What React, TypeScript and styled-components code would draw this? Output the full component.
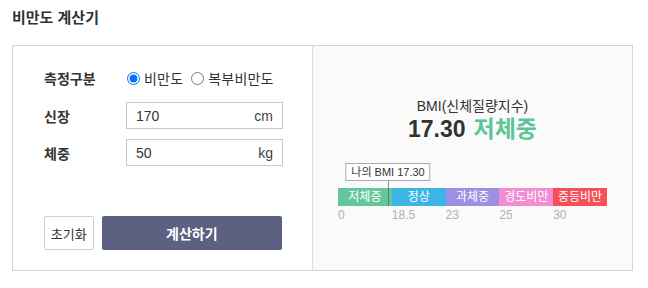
import React from "react";
import styled, { createGlobalStyle } from "styled-components";

const GlobalStyle = createGlobalStyle`
  body {
    margin: 0;
    background: #fff;
    font-family: "Liberation Sans", "Noto Sans CJK KR", sans-serif;
    color: #333;
  }
`;

const Page = styled.div`
  padding: 9px 12px 0 12px;
  width: 621px;
`;

const Title = styled.h2`
  margin: 0 0 19px 0;
  font-size: 15px;
  line-height: 17px;
  font-weight: bold;
  color: #333;
`;

const Box = styled.div`
  display: flex;
  height: 224px;
  border: 1px solid #d6d6d6;
`;

const FormPanel = styled.div`
  width: 300px;
  border-right: 1px solid #dcdcdc;
  padding: 20px 30px 0 31px;
  box-sizing: border-box;
  display: flex;
  flex-direction: column;
`;

const Row = styled.div<{ $h: number; $mb: number }>`
  display: flex;
  align-items: center;
  height: ${(p) => p.$h}px;
  margin-bottom: ${(p) => p.$mb}px;
`;

const Label = styled.div`
  width: 82px;
  flex-shrink: 0;
  font-size: 14px;
  font-weight: bold;
  color: #333;
`;

const RadioGroup = styled.div`
  display: flex;
  align-items: center;
  white-space: nowrap;
  font-size: 14px;
  letter-spacing: 0.2px;
  color: #333;
`;

const RadioLabel = styled.label`
  display: flex;
  align-items: center;
  white-space: nowrap;
  margin-right: 7px;

  input {
    margin: 0 4px 0 1px;
    width: 13px;
    height: 13px;
  }
`;

const Field = styled.div`
  display: flex;
  align-items: center;
  width: 157px;
  height: 27px;
  box-sizing: border-box;
  border: 1px solid #c8c8c8;
  background: #fff;
  padding: 0 9px 0 9px;
`;

const Input = styled.input`
  flex: 1;
  min-width: 0;
  border: none;
  outline: none;
  padding: 0;
  font-family: "Liberation Sans", sans-serif;
  font-size: 14px;
  color: #333;
  background: transparent;
`;

const Unit = styled.span`
  font-size: 14px;
  color: #444;
`;

const Buttons = styled.div`
  display: flex;
  margin-top: auto;
  margin-bottom: 20px;
  gap: 8px;
`;

const ResetButton = styled.button`
  width: 50px;
  height: 34px;
  padding: 0;
  background: #fff;
  border: 1px solid #cfcfcf;
  border-radius: 2px;
  font-family: "Noto Sans CJK KR", sans-serif;
  font-size: 13px;
  color: #333;
`;

const CalcButton = styled.button`
  width: 182px;
  height: 34px;
  background: #5d6181;
  border: none;
  border-radius: 2px;
  font-family: "Noto Sans CJK KR", sans-serif;
  font-size: 14px;
  font-weight: bold;
  color: #fff;
`;

const ResultPanel = styled.div`
  flex: 1;
  background: #fafafa;
  display: flex;
  flex-direction: column;
  align-items: center;
  padding-top: 51px;
`;

const Caption = styled.div`
  font-size: 14px;
  line-height: 18px;
  color: #333;
`;

const Result = styled.div`
  font-size: 23px;
  line-height: 28px;
  font-weight: bold;
  color: #333;
  margin-bottom: 20px;

  span {
    color: #5cc598;
    margin-left: 8px;
  }
`;

const Gauge = styled.div`
  position: relative;
  width: 269px;
  padding-top: 25px;
`;

const Tip = styled.div`
  position: absolute;
  top: 0;
  transform: translateX(-50%);
  background: #fff;
  border: 1px solid #aaa;
  font-size: 11px;
  line-height: 16px;
  padding: 0 5px;
  white-space: nowrap;
  color: #333;
`;

const Marker = styled.div`
  position: absolute;
  top: 18px;
  width: 1px;
  height: 25px;
  background: rgba(60, 90, 80, 0.6);
`;

const Bar = styled.div`
  display: flex;
  height: 18px;
`;

const Segment = styled.div<{ $color: string }>`
  flex: 1;
  background: ${(p) => p.$color};
  color: #fff;
  font-size: 12px;
  line-height: 18px;
  text-align: center;
  white-space: nowrap;
`;

const Scale = styled.div`
  display: flex;
  margin-top: 2px;
`;

const Tick = styled.div`
  flex: 1;
  font-size: 12px;
  line-height: 14px;
  color: #b0b0b0;
`;

const ranges = [
  { name: "저체중", color: "#62c89b", from: 0, to: 18.5 },
  { name: "정상", color: "#3bb5e3", from: 18.5, to: 23 },
  { name: "과체중", color: "#9e8fe4", from: 23, to: 25 },
  { name: "경도비만", color: "#f18dd1", from: 25, to: 30 },
  { name: "중등비만", color: "#f54f58", from: 30, to: 35 },
];

const bmi = 17.3;

const markerLeft = () => {
  const w = 269 / ranges.length;
  const i = ranges.findIndex((r) => bmi < r.to);
  const r = ranges[i];
  return Math.round(i * w + ((bmi - r.from) / (r.to - r.from)) * w);
};

const App: React.FC = () => {
  const left = markerLeft();
  return (
    <>
      <GlobalStyle />
      <Page>
        <Title>비만도 계산기</Title>
        <Box>
          <FormPanel>
            <Row $h={24} $mb={12}>
              <Label>측정구분</Label>
              <RadioGroup>
                <RadioLabel>
                  <input type="radio" name="kind" defaultChecked />
                  비만도
                </RadioLabel>
                <RadioLabel>
                  <input type="radio" name="kind" />
                  복부비만도
                </RadioLabel>
              </RadioGroup>
            </Row>
            <Row $h={27} $mb={10}>
              <Label>신장</Label>
              <Field>
                <Input defaultValue="170" />
                <Unit>cm</Unit>
              </Field>
            </Row>
            <Row $h={27} $mb={0}>
              <Label>체중</Label>
              <Field>
                <Input defaultValue="50" />
                <Unit>kg</Unit>
              </Field>
            </Row>
            <Buttons>
              <ResetButton>초기화</ResetButton>
              <CalcButton>계산하기</CalcButton>
            </Buttons>
          </FormPanel>
          <ResultPanel>
            <Caption>BMI(신체질량지수)</Caption>
            <Result>
              17.30<span>저체중</span>
            </Result>
            <Gauge>
              <Tip style={{ left }}>나의 BMI 17.30</Tip>
              <Marker style={{ left }} />
              <Bar>
                {ranges.map((r) => (
                  <Segment key={r.name} $color={r.color}>
                    {r.name}
                  </Segment>
                ))}
              </Bar>
              <Scale>
                {ranges.map((r) => (
                  <Tick key={r.name}>{r.from}</Tick>
                ))}
              </Scale>
            </Gauge>
          </ResultPanel>
        </Box>
      </Page>
    </>
  );
};

export default App;
